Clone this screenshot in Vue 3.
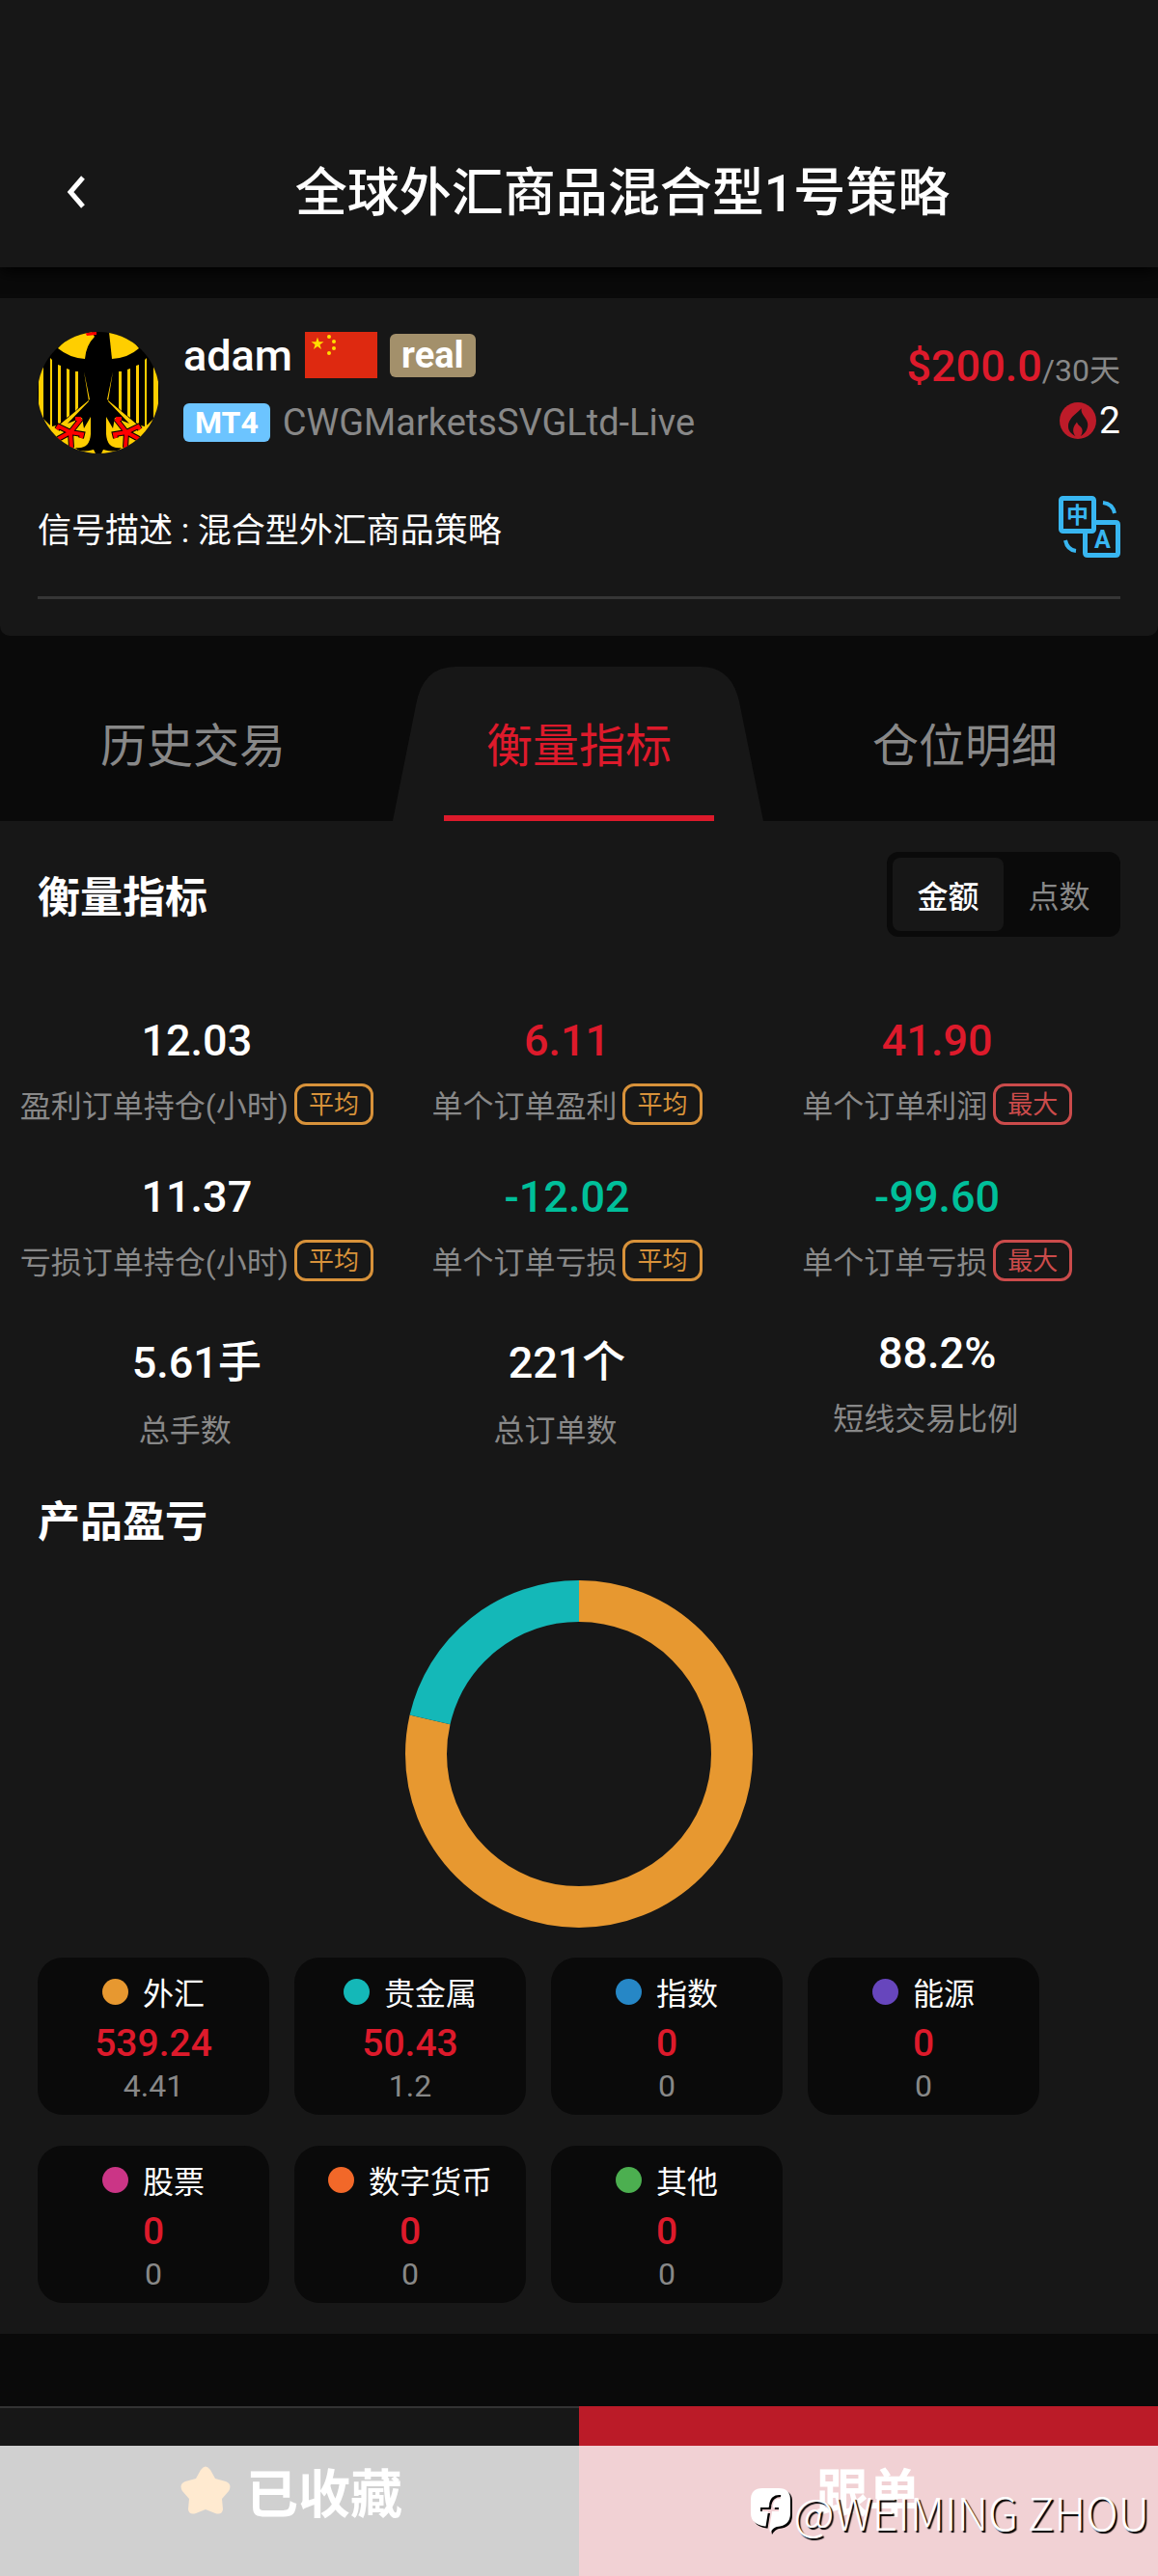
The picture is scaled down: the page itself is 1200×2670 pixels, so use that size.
<template>
  <div class="page">
    <header class="header">
      <button class="back" type="button" aria-label="返回">
        <svg width="22" height="34" viewBox="0 0 22 34">
          <path d="M18 2 L5 17 L18 32" fill="none" stroke="#fff" stroke-width="5" />
        </svg>
      </button>
      <h1 class="title">全球外汇商品混合型1号策略</h1>
    </header>

    <main>
      <section class="card">
        <div class="profile">
          <svg class="avatar" viewBox="0 0 126 126">
            <defs>
              <clipPath id="round"><circle cx="63" cy="63" r="63" /></clipPath>
              <g id="wing">
                <path d="M1 36 H6 V92 H1Z M13 27 L15 29 V100 L13 97Z M21 34 L24 35 V94 L21 96Z M30 38 L33 39 V87 L30 89Z M39 41 L42 41 V79 L39 82Z" />
                <path d="M48 41 L54 70 L23 96 L15 98 L12 96 L6 90 L8 100 L24 117 L38 126 H60 L58 122 Q44 126 39 120 Q54 122 55 106 L55 88 L48 100 L46 89 L31 95 L53 72 Z" />
              </g>
              <g id="claw">
                <path d="M45 90 L34 104 M39 90 L45 90 M34 104 L22 98 L20 101 M34 104 L46 106 L45 110 M34 104 L21 111 M34 104 L35 120" />
              </g>
            </defs>
            <g clip-path="url(#round)">
              <rect width="126" height="126" fill="#000" />
              <g fill="#ffce00">
                <path d="M21 17 Q33 27 49 28 Q50 14 59 5 L56 0 Q36 0 21 17Z" />
                <path d="M74 0 L77 28 Q94 27 105 17 Q92 0 74 0Z" />
                <use href="#wing" />
                <use href="#wing" transform="translate(126 0) scale(-1 1)" />
              </g>
              <path d="M49 0 H61 V3 L51 4Z" fill="#f00" />
              <g fill="none" stroke="#000" stroke-width="6">
                <use href="#claw" />
                <use href="#claw" transform="translate(126 0) scale(-1 1)" />
              </g>
              <g fill="none" stroke="#f00" stroke-width="4">
                <use href="#claw" />
                <use href="#claw" transform="translate(126 0) scale(-1 1)" />
              </g>
            </g>
          </svg>
          <div class="who">
            <div class="who-row">
              <strong class="name">adam</strong>
              <svg class="flag" viewBox="0 0 75 48">
                <rect width="75" height="48" fill="#de2910" />
                <g fill="#ffde00">
                  <path d="M13 5.500 L14.600 10.300 H19.500 L15.500 13.200 L17 18 L13 15 L9 18 L10.500 13.200 L6.500 10.300 H11.400Z" />
                  <circle cx="25" cy="5" r="2" />
                  <circle cx="30" cy="10" r="2" />
                  <circle cx="30" cy="17" r="2" />
                  <circle cx="25" cy="22" r="2" />
                </g>
              </svg>
              <span class="tag real">real</span>
            </div>
            <div class="who-row">
              <span class="tag mt4">MT4</span>
              <span class="server">CWGMarketsSVGLtd-Live</span>
            </div>
          </div>
          <div class="fee">
            <div><b class="price">$200.0</b><span class="period">/30天</span></div>
            <div class="hot">
              <svg width="38" height="38" viewBox="0 0 37 37">
                <circle cx="18.500" cy="18.500" r="18.500" fill="#bd1b29" />
                <path d="M22 6 C21 13 29 16 28.500 23 C28 29 25 32 22 33.500 H15 C10 31 8 27 9 21.500 C11 14 18 11 22 6Z" fill="#171717" />
                <path d="M17.500 20 C18.500 24 23 24 23 29 Q23 32 21 34 H16 Q13 31 14 26 Q15 23 17.500 20Z" fill="#bd1b29" />
              </svg>
              <span>2</span>
            </div>
          </div>
        </div>
        <div class="desc">
          <p>信号描述 : 混合型外汇商品策略</p>
          <button class="translate" type="button" aria-label="翻译">
            <svg width="64" height="64" viewBox="0 0 64 64">
              <g fill="none" stroke="#38b6f1" stroke-width="5">
                <rect x="2.500" y="2.500" width="34" height="34" rx="2" />
                <path d="M38 27.500 H59 Q61.500 27.500 61.500 30 V59 Q61.500 61.500 59 61.500 H30 Q27.500 61.500 27.500 59 V38" />
                <path d="M46 7 Q56 8 58 18 M7 46 Q9 56 18 57" stroke-width="4" />
              </g>
              <g fill="#38b6f1" text-anchor="middle" font-weight="700">
                <text x="19.500" y="28" font-size="23">中</text>
                <text x="45.500" y="54" font-size="25">A</text>
              </g>
            </svg>
          </button>
        </div>
      </section>

      <nav class="tabs">
        <button
          v-for="(tab, i) in tabs"
          :key="tab"
          type="button"
          class="tab"
          :class="{ active: i === activeTab }"
          @click="activeTab = i"
        >
          <svg v-if="i === activeTab" class="tab-shape" viewBox="0 0 400 160" preserveAspectRatio="none">
            <path d="M7 160 L31 40 Q38 0 72 0 H326 Q358 0 366 36 L391 160Z" fill="#171717" />
          </svg>
          <span class="tab-text">{{ tab }}</span>
        </button>
      </nav>

      <section class="panel">
        <div class="panel-head">
          <h2>衡量指标</h2>
          <div class="switch">
            <button
              v-for="unit in units"
              :key="unit"
              type="button"
              :class="{ on: unit === activeUnit }"
              @click="activeUnit = unit"
            >{{ unit }}</button>
          </div>
        </div>

        <div class="metrics">
          <div v-for="(m, i) in metrics" :key="i" class="metric">
            <div class="value" :class="m.color">{{ m.value }}</div>
            <div class="label" :class="{ plain: !m.badge }">
              <span>{{ m.label }}</span>
              <span v-if="m.badge" class="badge" :class="{ max: m.badge === '最大' }">{{ m.badge }}</span>
            </div>
          </div>
        </div>

        <h2 class="sub-head">产品盈亏</h2>
        <svg class="donut" viewBox="0 0 360 360">
          <g fill="none" stroke-width="43" transform="rotate(-90 180 180)">
            <circle
              v-for="arc in arcs"
              :key="arc.color"
              cx="180"
              cy="180"
              r="158.5"
              pathLength="100"
              :stroke="arc.color"
              :stroke-dasharray="`${arc.part} ${100 - arc.part}`"
              :stroke-dashoffset="-arc.start"
            />
          </g>
        </svg>

        <div class="products">
          <div v-for="p in products" :key="p.name" class="product">
            <div class="product-name">
              <i class="dot" :style="{ background: p.color }"></i>
              <span>{{ p.name }}</span>
            </div>
            <div class="profit">{{ p.profit }}</div>
            <div class="lots">{{ p.lots }}</div>
          </div>
        </div>
      </section>
    </main>

    <footer class="footer">
      <button class="action fav" type="button">
        <svg width="52" height="52" viewBox="0 0 52 52">
          <path d="M21 5 Q26 -2 31 5 L36 14 L47 17 Q54 20 50 27 L43 35 L44 46 Q43 52 36 50 L26 46 L16 50 Q9 52 8 46 L9 35 L2 27 Q-2 20 5 17 L16 14Z" fill="#fe9417" />
        </svg>
        <span>已收藏</span>
      </button>
      <button class="action follow" type="button">跟单</button>
      <div class="watermark">
        <svg width="44" height="48" viewBox="0 0 44 48">
          <mask id="cut">
            <rect width="44" height="48" fill="#fff" />
            <path d="M31 9 Q22 8 21 18 L17 43 M10 22 H29" fill="none" stroke="#000" stroke-width="4" />
          </mask>
          <path d="M12 0 H29 Q41 0 41 12 V26 Q41 39 27 40 Q23 41 20 46 L19 40 Q0 39 0 26 V12 Q0 0 12 0Z" fill="#fff" mask="url(#cut)" />
        </svg>
        <span>@WEIMING ZHOU</span>
      </div>
    </footer>
  </div>
</template>

<script setup>
import { ref } from 'vue';

const tabs = ['历史交易', '衡量指标', '仓位明细'];
const activeTab = ref(1);

const units = ['金额', '点数'];
const activeUnit = ref('金额');

const metrics = [
  { value: '12.03', label: '盈利订单持仓(小时)', badge: '平均' },
  { value: '6.11', label: '单个订单盈利', badge: '平均', color: 'red' },
  { value: '41.90', label: '单个订单利润', badge: '最大', color: 'red' },
  { value: '11.37', label: '亏损订单持仓(小时)', badge: '平均' },
  { value: '-12.02', label: '单个订单亏损', badge: '平均', color: 'green' },
  { value: '-99.60', label: '单个订单亏损', badge: '最大', color: 'green' },
  { value: '5.61手', label: '总手数' },
  { value: '221个', label: '总订单数' },
  { value: '88.2%', label: '短线交易比例' }
];

const products = [
  { name: '外汇', profit: 539.24, lots: 4.41, color: '#e79830' },
  { name: '贵金属', profit: 50.43, lots: 1.2, color: '#14b8b8' },
  { name: '指数', profit: 0, lots: 0, color: '#2687c6' },
  { name: '能源', profit: 0, lots: 0, color: '#6746bd' },
  { name: '股票', profit: 0, lots: 0, color: '#cb3586' },
  { name: '数字货币', profit: 0, lots: 0, color: '#f26829' },
  { name: '其他', profit: 0, lots: 0, color: '#4caf50' }
];

// Доли кольца считаются по объёму лотов
const total = products.reduce((sum, p) => sum + p.lots, 0);
let start = 0;
const arcs = products.filter(p => p.lots > 0).map(p => {
  const part = (p.lots / total) * 100;
  const arc = { color: p.color, part, start };
  start += part;
  return arc;
});
</script>

<style>
body {
  background: #0a0a0a;
}
</style>

<style scoped>
.page {
  display: flex;
  flex-direction: column;
  min-height: 100vh;
  background: #0a0a0a;
  color: #fff;
  font-family: Roboto, "Noto Sans CJK SC", sans-serif;
  font-size: 32px;
}

h1,
h2,
p {
  margin: 0;
}

button {
  padding: 0;
  border: 0;
  background: none;
  color: inherit;
  font: inherit;
  cursor: pointer;
}

svg {
  display: block;
}

main {
  flex: 1;
}

.header {
  display: flex;
  align-items: center;
  padding: 120px 0 0;
  height: 157px;
  background: #171717;
  box-shadow: 0 4px 16px #000;
}

.back {
  display: flex;
  justify-content: flex-end;
  width: 90px;
}

.title {
  flex: 1;
  padding-bottom: 6px;
  text-align: center;
  font-size: 54px;
  font-weight: 500;
}

/* Карточка сигнала */
.card {
  margin-top: 32px;
  padding: 35px 39px 38px;
  border-radius: 0 0 10px 10px;
  background: #171717;
}

.profile {
  display: flex;
  align-items: flex-start;
  gap: 25px;
}

.avatar {
  width: 126px;
  height: 126px;
}

.who {
  flex: 1;
}

.who-row {
  display: flex;
  align-items: center;
  gap: 13px;
  height: 48px;
}

.who-row + .who-row {
  margin-top: 22px;
}

.name {
  font-size: 45px;
  font-weight: 500;
}

.flag {
  width: 75px;
  height: 48px;
}

.tag {
  padding: 0 12px;
  border-radius: 6px;
  font-weight: 700;
}

.real {
  background: #a3906b;
  font-size: 38px;
  line-height: 45px;
}

.mt4 {
  background: #6cc4ff;
  font-size: 32px;
  line-height: 40px;
}

.server {
  color: #888;
  font-size: 38px;
}

.fee {
  text-align: right;
  line-height: 56px;
  padding-top: 8px;
}

.price {
  color: #dd1a2b;
  font-size: 45px;
  font-weight: 500;
}

.period {
  color: #888;
}

.hot {
  display: flex;
  align-items: center;
  justify-content: flex-end;
  gap: 3px;
  font-size: 39px;
  line-height: 48px;
}

.desc {
  display: flex;
  align-items: center;
  justify-content: space-between;
  padding: 44px 0 40px;
  border-bottom: 3px solid #363636;
  font-size: 35px;
}

/* Вкладки */
.tabs {
  display: grid;
  grid-template-columns: repeat(3, 1fr);
  padding-top: 32px;
}

.tab {
  position: relative;
  height: 160px;
  padding-bottom: 4px;
  color: #888;
  font-size: 48px;
}

.tab.active {
  color: #dd1a2b;
}

.tab.active::after {
  content: "";
  position: absolute;
  bottom: 0;
  left: 15%;
  width: 70%;
  height: 6px;
  background: #dd1a2b;
}

.tab-shape {
  position: absolute;
  inset: 0;
  width: 100%;
  height: 100%;
}

.tab-text {
  position: relative;
}

.panel {
  padding: 32px 39px;
  background: #171717;
}

.panel-head {
  display: flex;
  align-items: center;
  justify-content: space-between;
}

h2 {
  font-size: 44px;
  font-weight: 700;
}

.switch {
  display: flex;
  padding: 6px;
  border-radius: 12px;
  background: #0a0a0a;
}

.switch button {
  width: 115px;
  height: 76px;
  border-radius: 8px;
  color: #888;
}

.switch .on {
  background: #171717;
  color: #fff;
  font-weight: 500;
}

/* Показатели */
.metrics {
  display: grid;
  grid-template-columns: repeat(3, 1fr);
  row-gap: 47px;
  margin: 81px -2px 0 -27px;
}

.metric {
  text-align: center;
}

.value {
  font-size: 45px;
  font-weight: 500;
}

.red {
  color: #dd1a2b;
}

.green {
  color: #00bf9a;
}

.label {
  display: flex;
  align-items: center;
  justify-content: center;
  gap: 6px;
  margin-top: 16px;
  color: #888;
  white-space: nowrap;
}

.label.plain {
  padding-right: 24px;
}

.badge {
  padding: 1px 12px 0;
  border: 3px solid #d8923a;
  border-radius: 12px;
  color: #d8923a;
  font-size: 26px;
  line-height: 36px;
}

.badge.max {
  border-color: #cb4b4b;
  color: #cb4b4b;
}

.sub-head {
  margin-top: 39px;
}

.donut {
  width: 360px;
  height: 360px;
  margin: 32px auto 31px;
}

.products {
  display: flex;
  flex-wrap: wrap;
  gap: 32px 26px;
}

.product {
  width: 240px;
  padding: 14px 0 13px;
  box-sizing: border-box;
  border-radius: 26px;
  background: #0a0a0a;
  text-align: center;
}

.product-name {
  display: flex;
  align-items: center;
  justify-content: center;
  gap: 15px;
  line-height: 48px;
}

.dot {
  width: 27px;
  height: 27px;
  margin-bottom: 6px;
  border-radius: 50%;
}

.profit {
  color: #dd1a2b;
  font-size: 39px;
  font-weight: 500;
  line-height: 54px;
}

.lots {
  color: #888;
  line-height: 34px;
}

/* Нижняя панель */
.footer {
  position: relative;
  display: grid;
  grid-template-columns: repeat(2, 1fr);
  height: 176px;
}

.action {
  display: flex;
  align-items: center;
  justify-content: center;
  gap: 16px;
  padding-bottom: 4px;
  font-size: 54px;
  font-weight: 700;
}

.fav {
  padding-left: 4px;
  border-top: 2px solid #333;
  background: #171717;
}

.follow {
  background: #bb1b28;
}

.watermark {
  position: absolute;
  inset: 41px 0 0;
  display: flex;
  align-items: center;
  justify-content: flex-end;
  gap: 1px;
  padding-right: 9px;
  background: rgba(255, 255, 255, 0.8);
  font-family: "Noto Sans CJK SC", sans-serif;
  font-size: 46px;
  font-weight: 300;
  text-shadow: 2px 2px 1px #000;
  pointer-events: none;
}

.watermark svg {
  filter: drop-shadow(2px 2px 0 #000);
}
</style>
